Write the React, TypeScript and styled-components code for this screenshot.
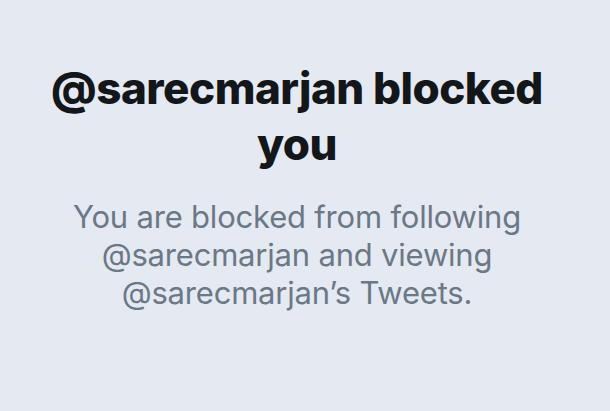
import React from "react";
import styled, { createGlobalStyle } from "styled-components";

const Global = createGlobalStyle`
  html, body { margin: 0; padding: 0; background: #e5e9f2; }
  body { font-family: Inter, "Noto Sans", sans-serif; -webkit-font-smoothing: antialiased; }
`;

const Page = styled.main`
  width: 610px;
  height: 411px;
  box-sizing: border-box;
  padding: 60px 16px 0 0;
  display: flex;
  flex-direction: column;
  align-items: center;
  background: #e5e9f2;
`;

const Title = styled.h1`
  margin: 0;
  font-size: 44px;
  line-height: 56px;
  font-weight: 800;
  letter-spacing: -0.5px;
  color: #14171a;
  text-align: center;
`;

const Message = styled.p`
  margin: 26px 0 0;
  font-size: 31px;
  line-height: 38px;
  font-weight: 400;
  letter-spacing: -0.2px;
  color: #6b7886;
  text-align: center;
`;

export default function App() {
  return (
    <>
      <Global />
      <Page>
        <Title>
          @sarecmarjan blocked
          <br />
          you
        </Title>
        <Message>
          You are blocked from following
          <br />
          @sarecmarjan and viewing
          <br />
          @sarecmarjan’s Tweets.
        </Message>
      </Page>
    </>
  );
}
